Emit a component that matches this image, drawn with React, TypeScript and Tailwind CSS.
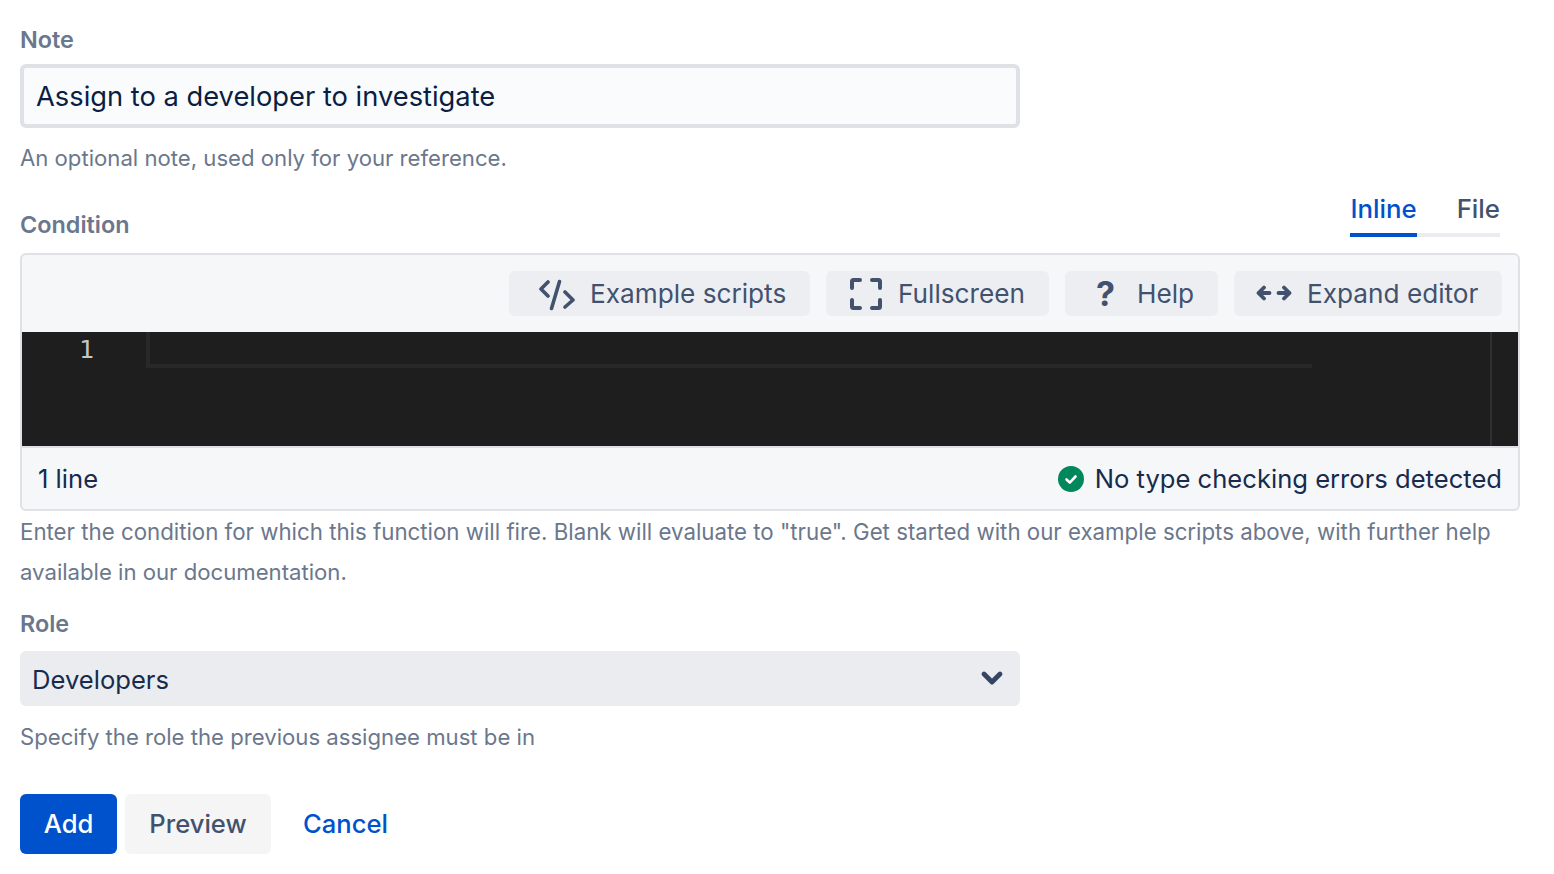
import { ChevronDown } from "lucide-react";

const font = "font-['Inter',_'Liberation_Sans',_sans-serif]";

function Label({ children }: { children: React.ReactNode }) {
  return <div className="text-[23.4px] leading-[32px] font-semibold text-[#6b778c]">{children}</div>;
}

function Help({ children }: { children: React.ReactNode }) {
  return <div className="text-[22.15px] leading-[40px] text-[#6b778c]">{children}</div>;
}

function ToolButton({ icon, label, className }: { icon: React.ReactNode; label: string; className: string }) {
  return (
    <div className={`flex h-[45px] items-center rounded-[6px] bg-[#edeef1] text-[26.2px] text-[#42526e] ${className}`}>
      {icon}
      <span className="whitespace-nowrap">{label}</span>
    </div>
  );
}

function CodeIcon() {
  return (
    <svg width="36" height="36" viewBox="0 0 36 36" fill="none" stroke="#42526e" strokeWidth="3.6" strokeLinecap="round" strokeLinejoin="round" className="mr-[15px] shrink-0">
      <path d="M9 6 2 13 9 20" />
      <path d="M20.5 5.5 12.5 32.5" />
      <path d="M26 16 34 24 26 31" />
    </svg>
  );
}

function FullscreenIcon() {
  return (
    <svg width="32" height="32" viewBox="0 0 32 32" fill="none" stroke="#42526e" strokeWidth="4" strokeLinecap="round" strokeLinejoin="round" className="mr-[16px] shrink-0">
      <path d="M2 10V3.5A1.5 1.5 0 0 1 3.5 2H10" />
      <path d="M22 2H28.5A1.5 1.5 0 0 1 30 3.5V10" />
      <path d="M2 22V28.5A1.5 1.5 0 0 0 3.5 30H10" />
      <path d="M22 30H28.5A1.5 1.5 0 0 0 30 28.5V22" />
    </svg>
  );
}

function ArrowsIcon() {
  return (
    <svg width="36" height="16" viewBox="0 0 36 16" fill="none" stroke="#42526e" strokeWidth="3.8" strokeLinecap="round" strokeLinejoin="round" className="mr-[15px] -mt-[2px] shrink-0">
      <path d="M13.5 8H2.5M8 2.5 2.5 8 8 13.5" />
      <path d="M22.5 8H33.5M28 2.5 33.5 8 28 13.5" />
    </svg>
  );
}

function CheckIcon() {
  return (
    <svg width="26" height="26" viewBox="0 0 26 26" className="mr-[11px] shrink-0">
      <circle cx="13" cy="13" r="13" fill="#00875a" />
      <path d="M8.5 13.5 11.8 16.6 17.5 10.5" fill="none" stroke="#fff" strokeWidth="2.6" strokeLinecap="round" strokeLinejoin="round" />
    </svg>
  );
}

export default function App() {
  return (
    <div className={`${font} h-[874px] w-[1554px] overflow-hidden bg-white pl-[20px] pt-[24px]`}>
      <div className="w-[1500px]">
        <Label>Note</Label>
        <div className="mt-[8px] flex h-[64px] w-[1000px] items-center rounded-[6px] border-[4px] border-[#dfe1e6] bg-[#fafbfc] pl-[12px] pt-[3px] text-[27.3px] text-[#091e42]">
          Assign to a developer to investigate
        </div>
        <div className="mt-[10px]">
          <Help>An optional note, used only for your reference.</Help>
        </div>

        <div className="flex h-[75px] items-end justify-between">
          <div className="pb-[12px]">
            <Label>Condition</Label>
          </div>
          <div className="mr-[20px] flex flex-col">
            <div className="flex text-[25.8px] leading-[36px] font-medium">
              <div className="border-b-[4px] border-[#0052cc] pb-[6px] text-[#0052cc]">Inline</div>
              <div className="border-b-[4px] border-[#ebecf0] pb-[6px] pl-[40px] text-[#42526e]">File</div>
            </div>
            <div className="h-[16px]" />
          </div>
        </div>

        <div className="overflow-hidden rounded-[6px] border-[2px] border-[#dfe1e6] bg-[#f6f7f9]">
          <div className="flex h-[77px] items-start justify-end gap-[16px] pt-[16px] pr-[16px]">
            <ToolButton icon={<CodeIcon />} label="Example scripts" className="w-[301px] pl-[30px]" />
            <ToolButton icon={<FullscreenIcon />} label="Fullscreen" className="w-[223px] pl-[24px]" />
            <ToolButton
              icon={<span className="mr-[22px] text-[34px] leading-none font-bold text-[#42526e]">?</span>}
              label="Help"
              className="w-[153px] pl-[31px]"
            />
            <ToolButton icon={<ArrowsIcon />} label="Expand editor" className="w-[268px] pl-[22px]" />
          </div>

          <div className="flex h-[114px] bg-[#1e1e1e]">
            <div className="w-[124px] pt-[2px] pr-[52px] text-right font-['DejaVu_Sans_Mono',_monospace] text-[25px] leading-[32px] text-[#c6c6c6]">
              1
            </div>
            <div className="h-[36px] w-[1166px] border-b-[4px] border-l-[4px] border-[#282828]" />
            <div className="flex-1" />
            <div className="w-[28px] border-l-[2px] border-[#2f2f2f]" />
          </div>

          <div className="flex h-[63px] items-center justify-between border-t-[2px] border-[#dfe1e6] px-[16px] pt-[2px] text-[25.6px] text-[#172b4d]">
            <span>1 line</span>
            <div className="flex items-center">
              <CheckIcon />
              <span>No type checking errors detected</span>
            </div>
          </div>
        </div>

        <div className="mt-[1px] text-[22.28px] leading-[40px] text-[#6b778c]">
          <div className="h-[40px] whitespace-nowrap">Enter the condition for which this function will fire. Blank will evaluate to "true". Get started with our example scripts above, with further help</div>
          <div className="text-[22.15px]">available in our documentation.</div>
        </div>

        <div className="mt-[16px]">
          <Label>Role</Label>
        </div>
        <div className="mt-[11px] flex h-[55px] w-[1000px] items-center justify-between rounded-[6px] bg-[#ebecf0] pl-[12px] pr-[12px] text-[25.6px] text-[#172b4d]">
          <span className="pt-[3px]">Developers</span>
          <ChevronDown size={32} strokeWidth={3.6} color="#344563" className="-mt-[2px]" />
        </div>
        <div className="mt-[11px]">
          <Help>Specify the role the previous assignee must be in</Help>
        </div>

        <div className="mt-[37px] flex items-center text-[25.6px] font-medium">
          <div className="flex h-[60px] w-[97px] items-center justify-center rounded-[6px] bg-[#0052cc] text-white">Add</div>
          <div className="ml-[8px] flex h-[60px] w-[146px] items-center justify-center rounded-[6px] bg-[#f5f5f5] text-[#42526e]">Preview</div>
          <div className="ml-[32px] text-[#0052cc]">Cancel</div>
        </div>
      </div>
    </div>
  );
}
